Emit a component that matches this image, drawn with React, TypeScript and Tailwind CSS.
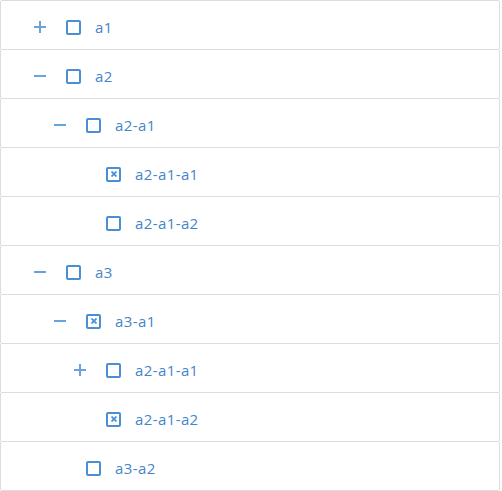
import React from 'react'

type Row = {
  label: string
  level: number
  toggle?: 'plus' | 'minus'
  checked?: boolean
}

const rows: Row[] = [
  { label: 'a1', level: 1, toggle: 'plus' },
  { label: 'a2', level: 1, toggle: 'minus' },
  { label: 'a2-a1', level: 2, toggle: 'minus' },
  { label: 'a2-a1-a1', level: 3, checked: true },
  { label: 'a2-a1-a2', level: 3 },
  { label: 'a3', level: 1, toggle: 'minus' },
  { label: 'a3-a1', level: 2, toggle: 'minus', checked: true },
  { label: 'a2-a1-a1', level: 3, toggle: 'plus' },
  { label: 'a2-a1-a2', level: 3, checked: true },
  { label: 'a3-a2', level: 2 },
]

function ToggleIcon({ kind }: { kind: 'plus' | 'minus' }) {
  return (
    <svg width="12" height="12" viewBox="0 0 12 12" className="text-[#6aa3dc]">
      <rect x="0" y="5" width="12" height="2" fill="currentColor" />
      {kind === 'plus' && <rect x="5" y="0" width="2" height="12" fill="currentColor" />}
    </svg>
  )
}

function Checkbox({ checked }: { checked?: boolean }) {
  return (
    <span className="flex h-[15px] w-[15px] items-center justify-center rounded-[2px] border-2 border-[#4a8fd6]">
      {checked && (
        <svg width="6" height="6" viewBox="0 0 6 6">
          <path d="M0.5 0.5L5.5 5.5M5.5 0.5L0.5 5.5" stroke="#4a8fd6" strokeWidth="1.8" />
        </svg>
      )}
    </span>
  )
}

export default function App() {
  const pad = ['pl-[29px]', 'pl-[49px]', 'pl-[69px]']

  return (
    <div className="w-[500px] bg-white font-['Open_Sans',sans-serif]">
      {rows.map((row, i) => (
        <div
          key={i}
          className={`flex h-[50px] items-center rounded-[2px] border border-[#dddddd] pt-1 ${pad[row.level - 1]} ${i > 0 ? '-mt-px' : ''}`}
        >
          <span className="flex w-5 items-center justify-center">
            {row.toggle && <ToggleIcon kind={row.toggle} />}
          </span>
          <span className="ml-4">
            <Checkbox checked={row.checked} />
          </span>
          <span className="ml-[14px] text-[15px] leading-5 tracking-[0.4px] text-[#4485c9]">{row.label}</span>
        </div>
      ))}
    </div>
  )
}
